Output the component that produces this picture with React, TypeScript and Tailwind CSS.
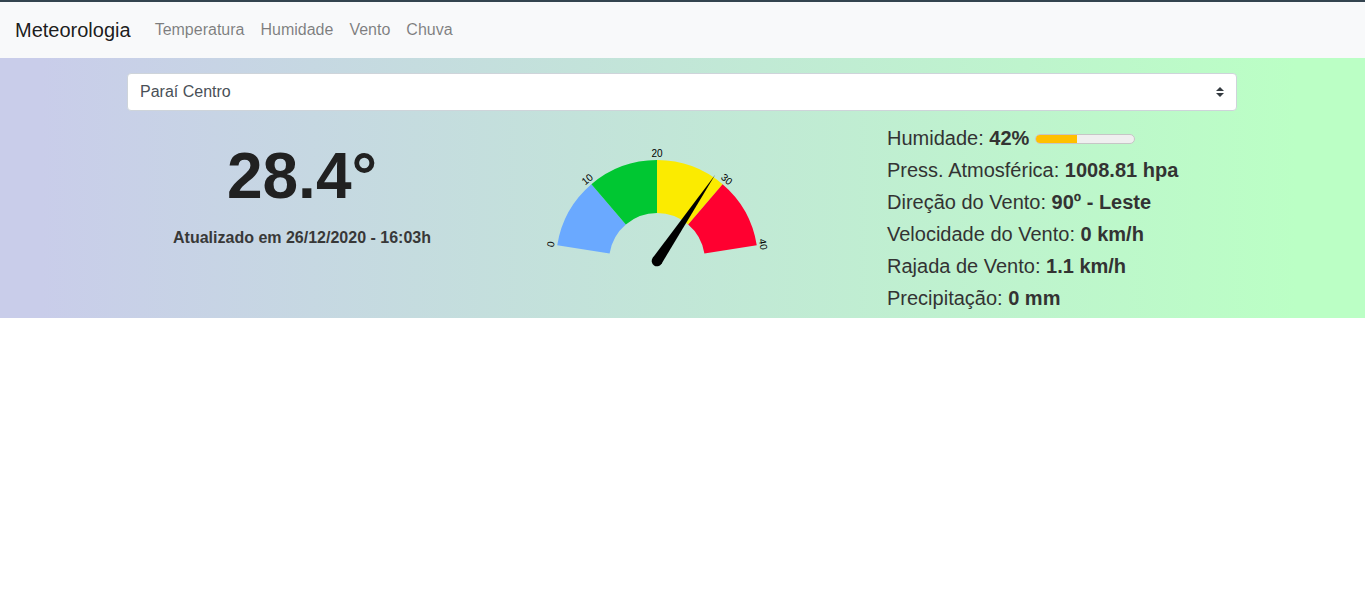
import React from "react";

const links = ["Temperatura", "Humidade", "Vento", "Chuva"];

const readings = [
  { label: "Press. Atmosférica", value: "1008.81 hpa" },
  { label: "Direção do Vento", value: "90º - Leste" },
  { label: "Velocidade do Vento", value: "0 km/h" },
  { label: "Rajada de Vento", value: "1.1 km/h" },
  { label: "Precipitação", value: "0 mm" },
];

const CX = 150;
const CY = 131;
const OUTER = 101;
const INNER = 48;
const SWEEP = 81;
const MAX = 40;

const colors = ["#6aa9ff", "#00c732", "#fbeb00", "#ff0030"];
const ticks = [0, 10, 20, 30, 40];

const toAngle = (value: number) => (value / MAX) * SWEEP * 2 - SWEEP;

function point(radius: number, degrees: number) {
  const rad = (degrees * Math.PI) / 180;
  return `${CX + radius * Math.sin(rad)} ${CY - radius * Math.cos(rad)}`;
}

function Gauge({ value }: { value: number }) {
  return (
    <svg width="300" height="150" role="img" aria-label="Termômetro" className="block">
      {colors.map((color, i) => {
        const a = toAngle(ticks[i]);
        const b = toAngle(ticks[i + 1]);
        return (
          <path
            key={color}
            fill={color}
            d={`M${point(OUTER, a)}A${OUTER} ${OUTER} 0 0 1 ${point(OUTER, b)}L${point(INNER, b)}A${INNER} ${INNER} 0 0 0 ${point(INNER, a)}Z`}
          />
        );
      })}
      {ticks.map((tick) => (
        <text
          key={tick}
          x={CX}
          y={CY - 104}
          textAnchor="middle"
          fontSize="10"
          transform={`rotate(${toAngle(tick)} ${CX} ${CY})`}
        >
          {tick}
        </text>
      ))}
      <g transform={`rotate(${toAngle(value)} ${CX} ${CY})`}>
        <path d={`M${CX - 5.3} ${CY}L${CX} ${CY - 104}L${CX + 5.3} ${CY}Z`} />
        <circle cx={CX} cy={CY} r="5.3" />
      </g>
    </svg>
  );
}

export default function App() {
  return (
    <div className="border-t-2 border-[#34444f] font-['Liberation_Sans',Arial,sans-serif] text-base text-[#212529]">
      <nav className="flex h-14 items-center bg-[#f8f9fa] px-[15px]">
        <a href="#" className="mr-4 text-xl text-black/90">
          Meteorologia
        </a>
        <ul className="flex">
          {links.map((link) => (
            <li key={link}>
              <a href="#" className="block px-2 pb-px text-black/50">
                {link}
              </a>
            </li>
          ))}
        </ul>
      </nav>

      <main className="bg-linear-to-r/srgb from-[#c9cdea] from-3% to-[#bbffc5] to-95% pt-[15px] pr-px pb-1">
        <div className="mx-auto max-w-[1140px] px-[15px]">
          <div className="relative">
            <select
              aria-label="Estação"
              className="block h-[38px] w-full appearance-none rounded border border-[#ced4da] bg-white px-3 text-[#495057]"
            >
              <option>Paraí Centro</option>
            </select>
            <svg
              viewBox="0 0 4 5"
              className="pointer-events-none absolute top-3.5 right-[13px] h-2.5 w-2"
              fill="#343a40"
              aria-hidden="true"
            >
              <path d="M2 0L0 2h4zm0 5L0 3h4z" />
            </svg>
          </div>

          <div className="-mx-[15px] mt-[11px] grid grid-cols-1 md:grid-cols-3">
            <section className="px-[15px] pt-2 text-center font-bold">
              <h1 className="mb-1 text-[64px] leading-23 text-[#212121]">28.4°</h1>
              <p className="text-[#383838]">Atualizado em 26/12/2020 - 16:03h</p>
            </section>

            <section className="px-[15px] pt-2">
              <Gauge value={28.4} />
            </section>

            <section className="px-[15px] text-xl leading-8 text-[#333]">
              <div className="flex items-center">
                <label htmlFor="humidade">
                  Humidade: <strong>42%</strong>
                </label>
                <meter
                  id="humidade"
                  min={0}
                  max={100}
                  low={50}
                  high={90}
                  optimum={70}
                  value={42}
                  className="mt-px ml-1.5 h-5 w-[100px] appearance-none bg-none [&::-webkit-meter-bar]:overflow-hidden [&::-webkit-meter-bar]:rounded-full [&::-webkit-meter-bar]:border [&::-webkit-meter-bar]:border-[#c6c6c6] [&::-webkit-meter-bar]:bg-[#efefef] [&::-webkit-meter-bar]:bg-none [&::-webkit-meter-suboptimum-value]:bg-[#ffc000] [&::-webkit-meter-suboptimum-value]:bg-none"
                />
              </div>
              {readings.map(({ label, value }) => (
                <p key={label}>
                  {label}: <strong>{value}</strong>
                </p>
              ))}
            </section>
          </div>
        </div>
      </main>
    </div>
  );
}
